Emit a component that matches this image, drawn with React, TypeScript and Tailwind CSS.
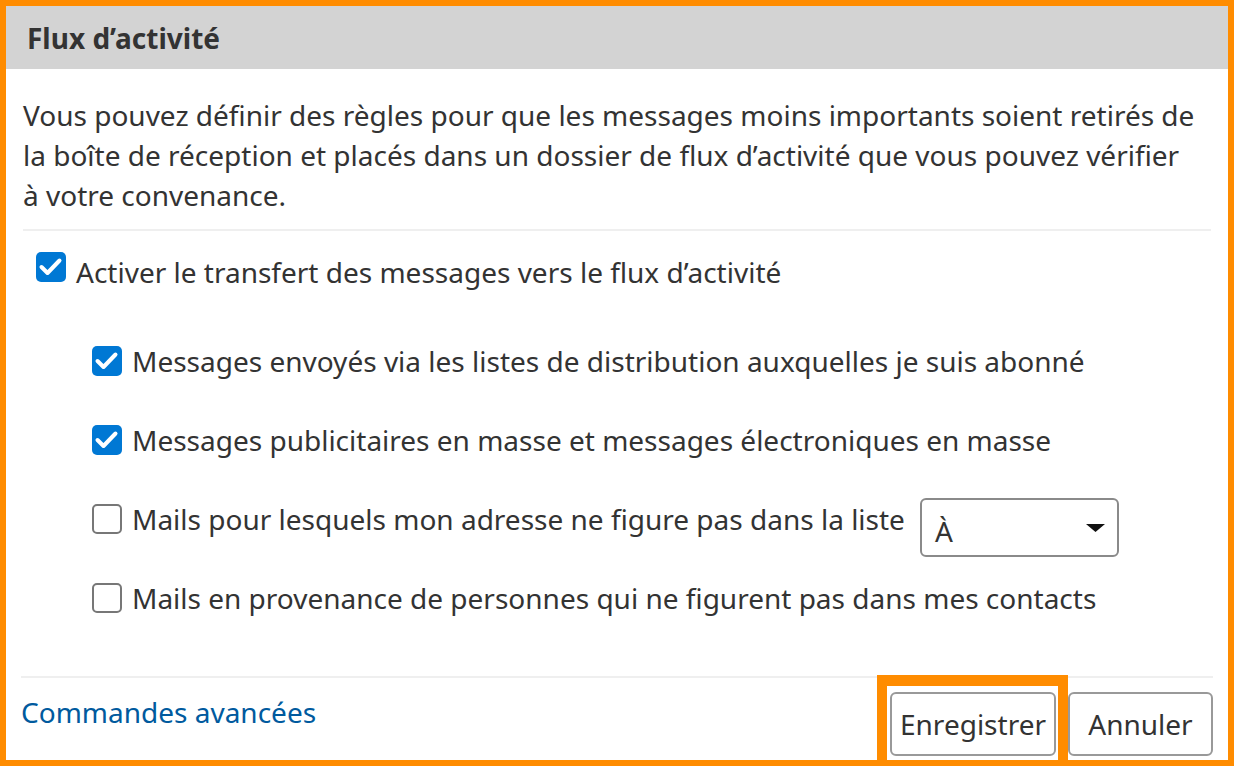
import { useState } from "react";

function Box({ checked, onToggle }: { checked: boolean; onToggle: () => void }) {
  return (
    <button
      type="button"
      onClick={onToggle}
      className={
        checked
          ? "w-[30px] h-[30px] shrink-0 rounded-[5px] bg-[#0078d4] flex items-center justify-center"
          : "w-[30px] h-[30px] shrink-0 rounded-[5px] border-2 border-[#777] bg-white"
      }
    >
      {checked && (
        <svg width="30" height="30" viewBox="0 0 30 30">
          <path d="M5.5 15 L11.5 21 L23.5 8.5" fill="none" stroke="#fff" strokeWidth="4" strokeLinecap="round" strokeLinejoin="round" />
        </svg>
      )}
    </button>
  );
}

export default function App() {
  const [enabled, setEnabled] = useState(true);
  const [lists, setLists] = useState(true);
  const [bulk, setBulk] = useState(true);
  const [notTo, setNotTo] = useState(false);
  const [notContacts, setNotContacts] = useState(false);

  return (
    <div className="w-[1234px] h-[766px] border-[6px] border-[#ff8c00] bg-white relative overflow-hidden font-['Noto_Sans',sans-serif] text-[#333]">
      <div className="h-[63px] bg-[#d3d3d3] flex items-center px-[21px]">
        <h1 className="text-[28px] font-bold">Flux d’activité</h1>
      </div>

      <div className="px-[17px] flex flex-col">
        <p className="mt-[26px] text-[28px] leading-[40px] pr-[12px]">
          Vous pouvez définir des règles pour que les messages moins importants soient retirés de la boîte de réception et placés dans un dossier de flux d’activité que vous pouvez vérifier à votre convenance.
        </p>
        <div className="mt-[14px] h-[2px] bg-[#efefef]" />

        <div className="mt-[21px] ml-[13px] h-[30px] flex items-center gap-[10px] text-[28px]">
          <Box checked={enabled} onToggle={() => setEnabled(!enabled)} />
          <span className="translate-y-[5px]">Activer le transfert des messages vers le flux d’activité</span>
        </div>

        <div className="mt-[64px] ml-[69px] flex flex-col gap-[49px] text-[28px]">
          <div className="h-[30px] flex items-center gap-[10px]">
            <Box checked={lists} onToggle={() => setLists(!lists)} />
            <span>Messages envoyés via les listes de distribution auxquelles je suis abonné</span>
          </div>
          <div className="h-[30px] flex items-center gap-[10px]">
            <Box checked={bulk} onToggle={() => setBulk(!bulk)} />
            <span>Messages publicitaires en masse et messages électroniques en masse</span>
          </div>
          <div className="h-[30px] flex items-start gap-[10px]">
            <Box checked={notTo} onToggle={() => setNotTo(!notTo)} />
            <span className="leading-[30px]">Mails pour lesquels mon adresse ne figure pas dans la liste</span>
            <div className="-mt-[6px] ml-[5px] w-[199px] h-[59px] shrink-0 rounded-[6px] border-2 border-[#8a8a8a] flex items-center justify-between pl-[13px] pr-[12px]">
              <span className="translate-y-[3px]">À</span>
              <svg width="19" height="8" viewBox="0 0 19 8">
                <path d="M0 0 H19 L9.5 8 Z" fill="#111" />
              </svg>
            </div>
          </div>
          <div className="h-[30px] flex items-center gap-[10px]">
            <Box checked={notContacts} onToggle={() => setNotContacts(!notContacts)} />
            <span>Mails en provenance de personnes qui ne figurent pas dans mes contacts</span>
          </div>
        </div>
      </div>

      <div className="px-[15px]">
        <div className="mt-[63px] h-[2px] bg-[#efefef]" />
        <div className="mt-[14px] flex justify-between items-start">
          <a href="#" className="text-[28px] leading-[40px] text-[#005a9e]">
            Commandes avancées
          </a>
          <div className="flex gap-[12px] text-[28px]">
            <button className="w-[166px] h-[64px] rounded-[6px] border-2 border-[#999] bg-white">Enregistrer</button>
            <button className="w-[145px] h-[64px] rounded-[6px] border-2 border-[#999] bg-white">Annuler</button>
          </div>
        </div>
      </div>

      <div className="absolute left-[871px] top-[669px] w-[191px] h-[100px] border-[10px] border-t-[11px] border-[#ff8c00] pointer-events-none" />
    </div>
  );
}
